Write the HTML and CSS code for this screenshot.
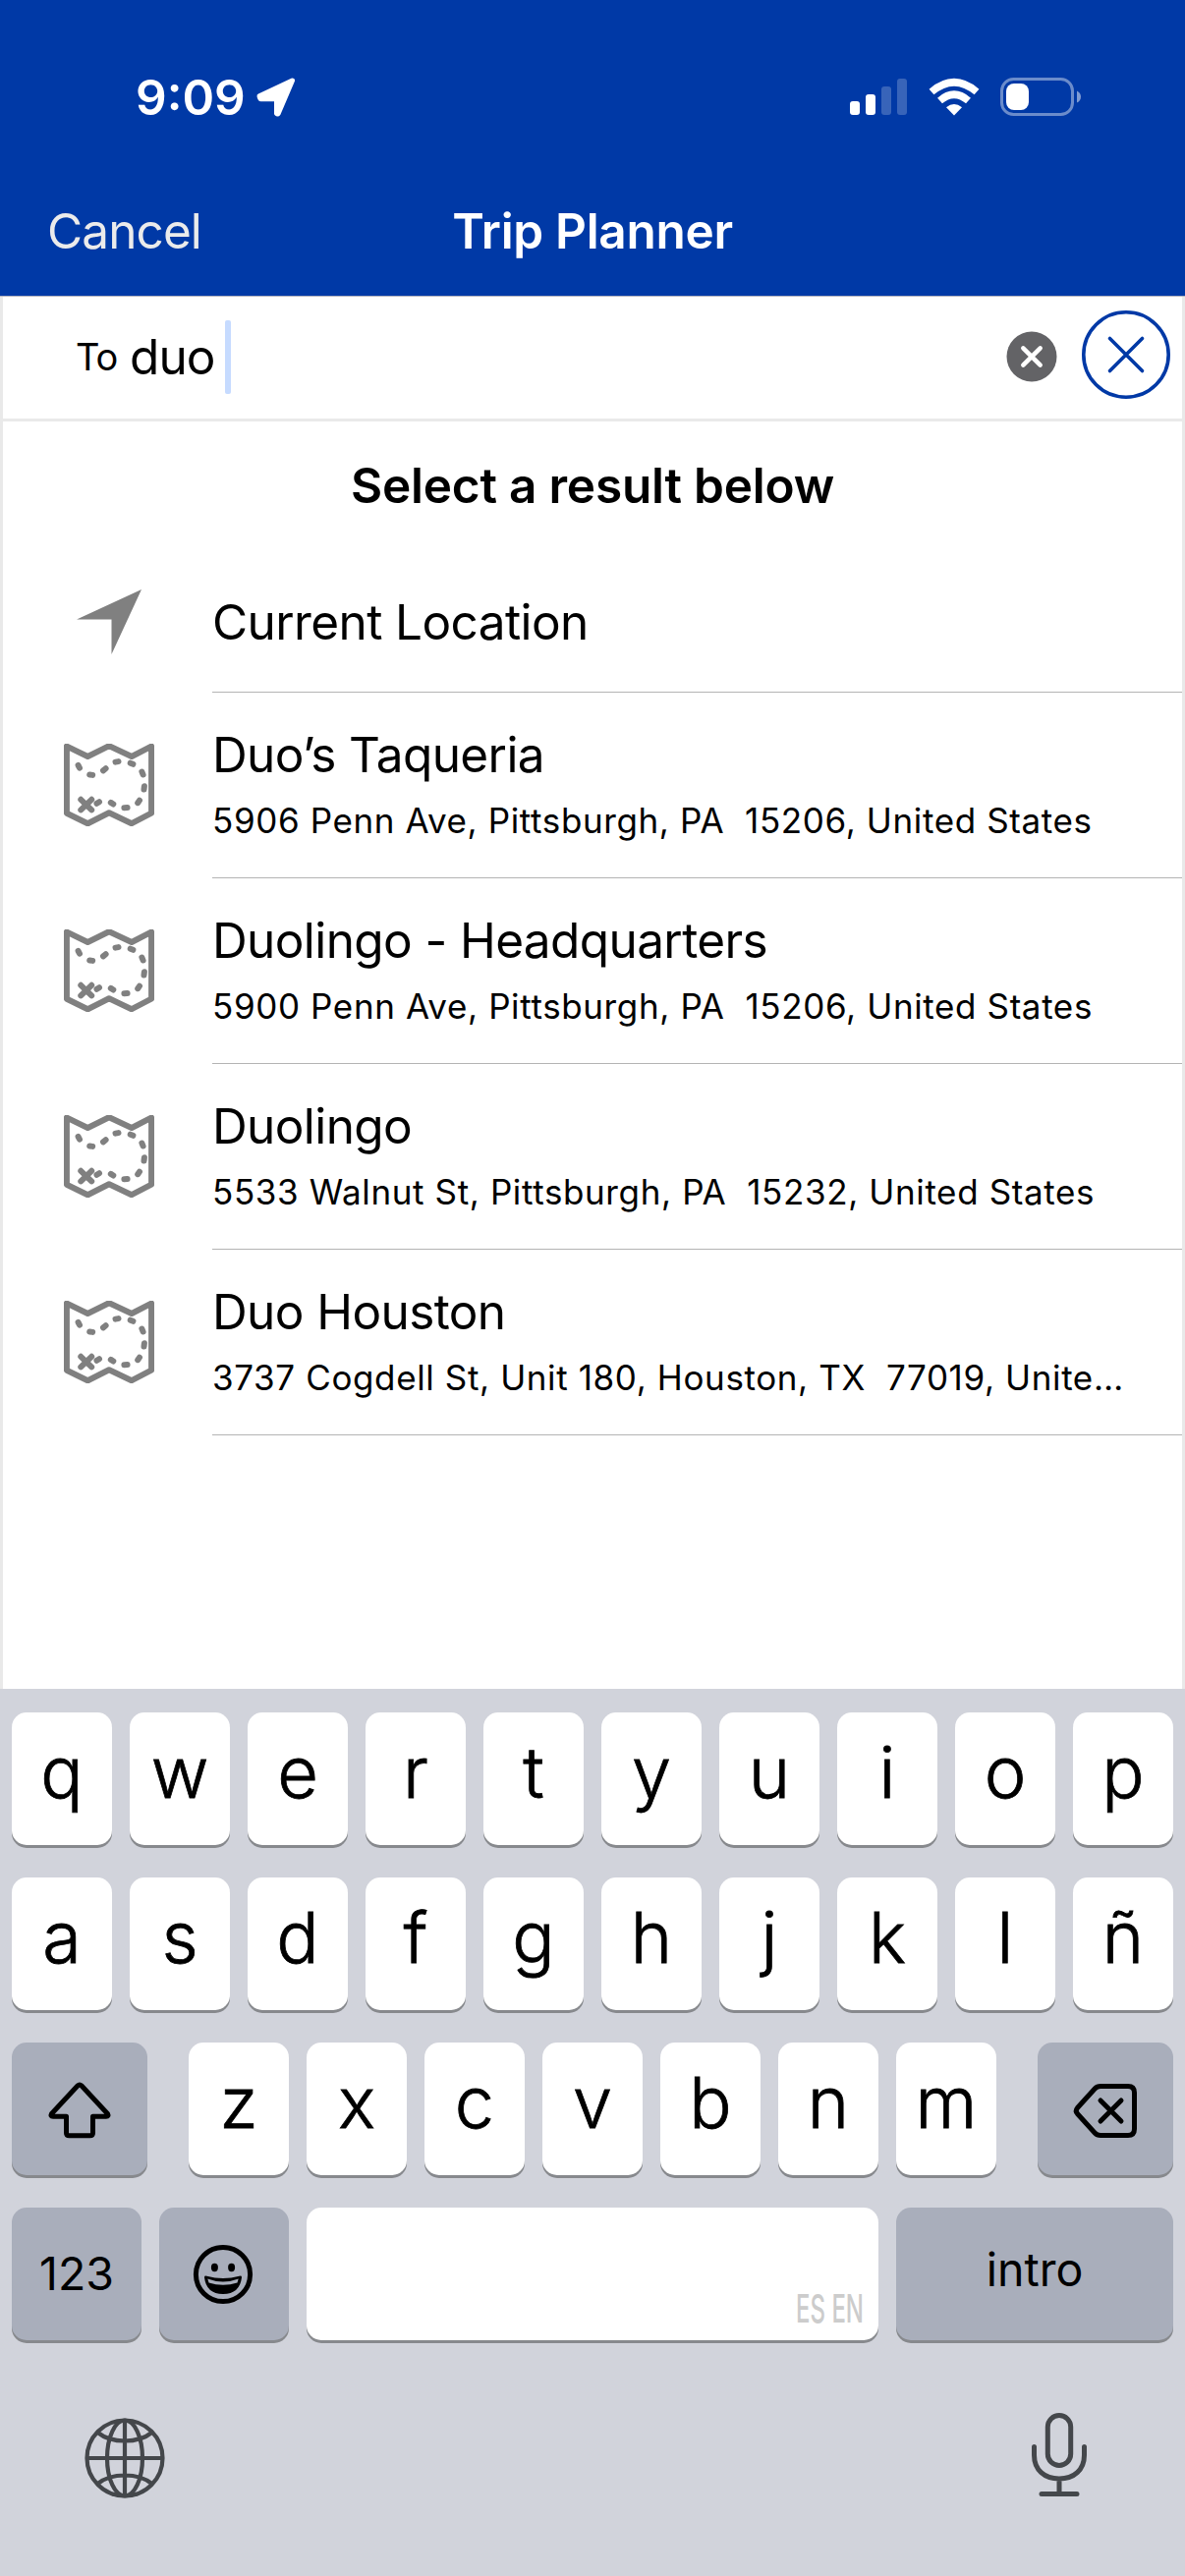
FILE: index.html
```html
<!DOCTYPE html>
<html lang="en">
<head>
    <meta charset="UTF-8">
    <meta name="viewport" content="width=device-width, initial-scale=1.0">
    <title>Trip Planner</title>
    <link rel="stylesheet" href="styles.css">
</head>
<body>

<svg class="sprite">
    <symbol id="map" viewBox="0 0 92 84">
        <path d="M2.9 2.6L24.3 13 46 2.2 69 13 89.1 2.6V70.7L69 81.2 46 70.3 24.3 81.2 2.9 70.7Z"/>
        <path d="M14.6 22L16 24.6M26.2 31.5L29.2 31.9M40 27.4L42.6 25.2M52.5 18.6L55.5 18.1M67.7 19.7L70.4 20.8M79.4 28.5L80.6 31.5M81.9 43.2L81.5 46.6M77 57.6L75.2 60.2M64.6 65.1L61.4 65.2M50.3 61.5L47.8 59.9M33.5 60.8L36 59.2"/>
        <path d="M17.3 56.8L28.2 67.3M28.2 56.8L17.3 67.3"/>
    </symbol>
</svg>

<div class="header">
    <div class="status">
        <span class="time">9:09</span>
        <svg class="status-arrow" width="40" height="40" viewBox="0 0 40 40"><path d="M36.5 3L3 18.8Q3.500 21.700 4.500 21.700H20.500V36.500Q21.500 37.500 22.200 36.500Z" fill="#fff" stroke="#fff" stroke-width="5" stroke-linejoin="round"/></svg>
        <svg class="signal" width="58" height="38" viewBox="0 0 58 38" fill="#fff">
            <rect y="23" width="10" height="14" rx="3"/>
            <rect x="16" y="16" width="10" height="21" rx="3"/>
            <rect x="32" y="8" width="10" height="29" rx="3" opacity=".22"/>
            <rect x="48" width="10" height="37" rx="3" opacity=".22"/>
        </svg>
        <svg class="wifi" width="52" height="38" viewBox="0 0 52 38" fill="none" stroke="#fff" stroke-width="7.500">
            <path d="M3 13.500Q26 -6 49 13.500"/>
            <path d="M11.500 22.500Q26 10 40.500 22.500"/>
            <path d="M18 29.300Q26 22.500 34 29.300L26 37.500Z" fill="#fff" stroke="none"/>
        </svg>
        <svg class="battery" width="83" height="40" viewBox="0 0 83 40">
            <rect x="1.500" y="1.500" width="72" height="36" rx="12" fill="none" stroke="#fff" stroke-width="3" opacity=".42"/>
            <path d="M78 13.500Q82 15.500 82 19.500T78 25.500Z" fill="#fff" opacity=".5"/>
            <rect x="6" y="6" width="23" height="27" rx="8" fill="#fff"/>
        </svg>
    </div>
    <div class="nav">
        <span class="cancel">Cancel</span>
        <span class="nav-title">Trip Planner</span>
    </div>
</div>

<div class="content">
    <div class="search">
        <span class="label">To</span>
        <span class="query">duo</span>
        <span class="caret"></span>
        <svg class="clear" width="52" height="52" viewBox="0 0 52 52"><circle cx="26" cy="26" r="25.500" fill="#636366"/><path d="M17.300 17.300L34.700 34.700M34.700 17.300L17.300 34.700" stroke="#fff" stroke-width="4.500" stroke-linecap="round"/></svg>
        <svg class="close" width="90" height="90" viewBox="0 0 90 90" fill="none" stroke="#0039a6" stroke-width="3.600" stroke-linecap="round"><circle cx="45" cy="45" r="43.200"/><path d="M28.500 28.500L61.500 61.500M61.500 28.500L28.500 61.500"/></svg>
    </div>
    <h1 class="heading">Select a result below</h1>
    <div class="row row-location">
        <svg class="icon" width="92" height="66" viewBox="0 0 92 66"><path d="M79 0L13 30.500H48.500V66Z" fill="#808080"/></svg>
        <div class="info">
            <div class="name">Current Location</div>
        </div>
    </div>
    <div class="row">
        <svg class="icon map" width="92" height="84"><use href="#map"/></svg>
        <div class="info">
            <div class="name">Duo’s Taqueria</div>
            <div class="address">5906 Penn Ave, Pittsburgh, PA&nbsp; 15206, United States</div>
        </div>
    </div>
    <div class="row">
        <svg class="icon map" width="92" height="84"><use href="#map"/></svg>
        <div class="info">
            <div class="name">Duolingo - Headquarters</div>
            <div class="address">5900 Penn Ave, Pittsburgh, PA&nbsp; 15206, United States</div>
        </div>
    </div>
    <div class="row">
        <svg class="icon map" width="92" height="84"><use href="#map"/></svg>
        <div class="info">
            <div class="name">Duolingo</div>
            <div class="address">5533 Walnut St, Pittsburgh, PA&nbsp; 15232, United States</div>
        </div>
    </div>
    <div class="row">
        <svg class="icon map" width="92" height="84"><use href="#map"/></svg>
        <div class="info">
            <div class="name">Duo Houston</div>
            <div class="address">3737 Cogdell St, Unit 180, Houston, TX&nbsp; 77019, Unite…</div>
        </div>
    </div>
</div>

<div class="keyboard">
    <div class="keys">
        <span class="key">q</span>
        <span class="key">w</span>
        <span class="key">e</span>
        <span class="key">r</span>
        <span class="key">t</span>
        <span class="key">y</span>
        <span class="key">u</span>
        <span class="key">i</span>
        <span class="key">o</span>
        <span class="key">p</span>
    </div>
    <div class="keys">
        <span class="key">a</span>
        <span class="key">s</span>
        <span class="key">d</span>
        <span class="key">f</span>
        <span class="key">g</span>
        <span class="key">h</span>
        <span class="key">j</span>
        <span class="key">k</span>
        <span class="key">l</span>
        <span class="key">ñ</span>
    </div>
    <div class="keys">
        <span class="key dark shift"><svg width="66" height="58" viewBox="0 0 66 58"><path d="M31.200 3.800Q33 2 34.800 3.800L61.500 32.500Q63 35.300 60 35.300H46.500V52Q46.500 54.800 43.500 54.800H22.500Q19.500 54.800 19.500 52V35.300H6Q3 35.300 4.500 32.500Z"/></svg></span>
        <span class="key">z</span>
        <span class="key">x</span>
        <span class="key">c</span>
        <span class="key">v</span>
        <span class="key">b</span>
        <span class="key">n</span>
        <span class="key">m</span>
        <span class="key dark delete"><svg width="66" height="58" viewBox="0 0 66 58"><path d="M28 4.500H56Q62.500 4.500 62.500 11V48Q62.500 54.500 56 54.500H28Q24.500 54.500 22.200 52L4.500 32.500Q2 29.500 4.500 26.500L22.200 7Q24.500 4.500 28 4.500ZM28 19L49 40M49 19L28 40"/></svg></span>
    </div>
    <div class="keys">
        <span class="key dark small numbers">123</span>
        <span class="key dark emoji"><svg width="62" height="62" viewBox="0 0 62 62">
            <circle cx="31" cy="31" r="27.600" fill="none" stroke="#000" stroke-width="5"/>
            <ellipse cx="22.400" cy="24" rx="3.500" ry="4.200"/>
            <ellipse cx="39.600" cy="24" rx="3.500" ry="4.200"/>
            <path d="M12 34Q12 32 14.500 32.700 31 37.500 47.500 32.700 50 32 50 34 48 51 31 51T12 34Z"/>
            <path d="M15.300 35.500Q31 41.500 46.700 35.500L45.500 39.500Q31 44 16.500 39.500Z" fill="#a9aebb"/>
        </svg></span>
        <span class="key space"><span class="langs">ES EN</span></span>
        <span class="key dark small intro">intro</span>
    </div>
    <div class="tools">
        <svg width="82" height="82" viewBox="0 0 82 82" fill="none" stroke="#44474b" stroke-width="4.200">
            <circle cx="41" cy="41" r="38.500"/>
            <ellipse cx="41" cy="41" rx="18" ry="38.500"/>
            <path d="M41 2V80M2 41H80M13.500 15Q24 23.500 41 23.500T68.500 15M13.500 67Q24 58.500 41 58.500T68.500 67"/>
        </svg>
        <svg class="mic" width="58" height="86" viewBox="0 0 58 86" fill="none" stroke="#44474b" stroke-width="5" stroke-linecap="round">
            <rect x="17.300" y="2.500" width="23.400" height="51" rx="11.700"/>
            <path d="M3.500 34.500V43C3.500 58 14 67 29 67S54.500 58 54.500 43V34.500M29 67V82.500M11 82.500H47"/>
        </svg>
    </div>
</div>

</body>
</html>
```
FILE: styles.css
```css
* {
    box-sizing: border-box;
}
body {
    margin: 0;
    width: 1206px;
    height: 2622px;
    overflow: hidden;
    font-family: Inter, 'Liberation Sans', sans-serif;
    font-size: 49.5px;
    color: #000;
    background: #fff;
}
svg {
    display: block;
    flex: none;
    overflow: visible;
}
.sprite {
    width: 0;
    height: 0;
    position: absolute;
}
.header {
    height: 302px;
    background: #0039a6;
    border-bottom: 1px solid #b3b3c0;
    color: #fff;
}
.status {
    height: 197px;
    padding: 0 105px 0 138px;
    display: flex;
    align-items: center;
}
.time {
    width: 123px;
    font-weight: 600;
}
.signal {
    margin-left: auto;
}
.wifi {
    margin-left: 22px;
}
.battery {
    margin-left: 21px;
}
.nav {
    height: 76px;
    padding: 0 48px;
    display: grid;
    grid-template-columns: 1fr auto 1fr;
    align-items: center;
}
.cancel {
    color: #ebebeb;
    letter-spacing: -0.9px;
}
.nav-title {
    font-weight: 600;
    letter-spacing: -0.3px;
}
.content {
    height: 1417px;
    border: solid #e9e9e9;
    border-width: 0 3px;
}
.search {
    height: 127px;
    padding: 0 12px 2px 74px;
    border-bottom: 3px solid #e9e9e9;
    display: flex;
    align-items: center;
}
.label {
    width: 55px;
    font-size: 38px;
    letter-spacing: -1px;
}
.query {
    width: 97px;
    letter-spacing: -0.9px;
}
.caret {
    width: 6px;
    height: 75px;
    border-radius: 2px;
    background: #c6dbff;
}
.clear {
    margin-left: auto;
}
.close {
    margin: 0 0 4px 25px;
}
.heading {
    margin: 0;
    line-height: 130px;
    font-size: 49.5px;
    font-weight: 600;
    letter-spacing: -0.2px;
    text-align: center;
}
.row {
    height: 189px;
    padding-left: 62px;
    display: flex;
}
.row-location {
    height: 146px;
}
.icon {
    margin: 52px 59px 0 0;
}
.row-location .icon {
    margin-top: 41px;
}
.map {
    fill: none;
    stroke: #808080;
    stroke-width: 6;
    stroke-linecap: round;
    stroke-linejoin: round;
}
.info {
    flex: 1;
    padding-top: 33px;
    border-bottom: 1px solid #b4b4b4;
    white-space: nowrap;
}
.row-location .info {
    padding-top: 44px;
}
.name {
    line-height: 60px;
    letter-spacing: -0.6px;
}
.address {
    margin-top: 13px;
    font-size: 35px;
    line-height: 48px;
    letter-spacing: 0.62px;
}
.keyboard {
    height: 903px;
    padding: 24px 12px 0;
    background: #d1d3db;
}
.keys {
    height: 135px;
    margin-bottom: 33px;
    display: flex;
    gap: 18px;
}
.key {
    width: 102px;
    border-radius: 15px;
    background: #fff;
    box-shadow: 0 3px 0 #87898d;
    font-size: 72px;
    font-weight: 300;
    line-height: 122px;
    text-align: center;
    -webkit-text-stroke: 0.8px #000;
}
.dark {
    background: #a9aebb;
}
.shift,
.delete {
    width: 138px;
    padding-top: 40px;
}
.shift {
    margin-right: 24px;
}
.delete {
    margin-left: 24px;
}
.shift svg,
.delete svg {
    margin: 0 auto;
    fill: none;
    stroke: #000;
    stroke-width: 5;
    stroke-linecap: round;
    stroke-linejoin: round;
}
.small {
    font-size: 46.5px;
    font-weight: 400;
    -webkit-text-stroke: 0;
}
.numbers {
    width: 132px;
    line-height: 135px;
}
.emoji {
    width: 132px;
    padding: 37px 0 0 34px;
}
.space {
    width: 582px;
    padding: 79px 15px 0;
    display: flex;
    justify-content: flex-end;
    align-items: flex-start;
    -webkit-text-stroke: 0;
}
.langs {
    font-size: 40px;
    font-weight: 500;
    line-height: 48px;
    color: #ccc;
    transform: scaleX(0.6);
    transform-origin: right;
}
.intro {
    width: 282px;
    line-height: 126px;
}
.tools {
    padding: 41px 87px 0 74px;
    display: flex;
    justify-content: space-between;
    align-items: flex-end;
}
.mic {
    margin-bottom: 1px;
}
```
